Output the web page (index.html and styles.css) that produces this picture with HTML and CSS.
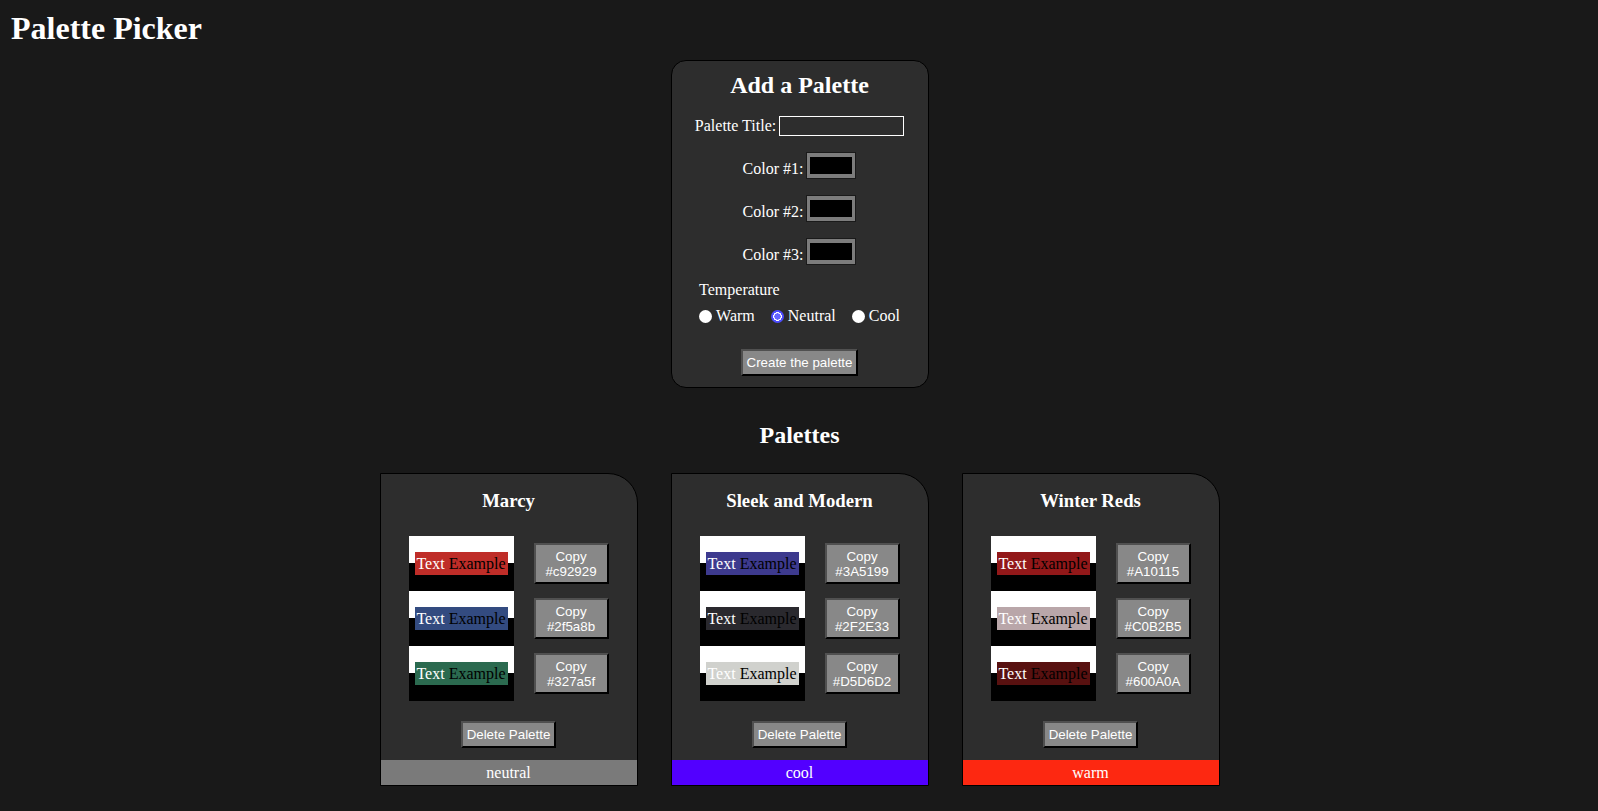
FILE: index.html
```html
<!DOCTYPE html>
<html lang="en">
<head>
<meta charset="utf-8">
<title>Palette Picker</title>
<link rel="stylesheet" href="styles.css">
</head>
<body>
<h1 class="app-title">Palette Picker</h1>
<main class="main">
  <form class="add-form">
    <h2 class="form-title">Add a Palette</h2>
    <div class="field title-field">
      <label for="title" class="field-label">Palette Title:</label>
      <input id="title" type="text" class="text-input">
    </div>
    <div class="field color-field">
      <label for="c1" class="field-label">Color #1:</label>
      <input id="c1" type="color" class="color-input" value="#000000">
    </div>
    <div class="field color-field">
      <label for="c2" class="field-label">Color #2:</label>
      <input id="c2" type="color" class="color-input" value="#000000">
    </div>
    <div class="field color-field">
      <label for="c3" class="field-label">Color #3:</label>
      <input id="c3" type="color" class="color-input" value="#000000">
    </div>
    <div class="temp">
      <div class="temp-label">Temperature</div>
      <div class="radios">
        <label class="radio"><input type="radio" name="temp" class="radio-input">Warm</label>
        <label class="radio"><input type="radio" name="temp" class="radio-input" checked>Neutral</label>
        <label class="radio"><input type="radio" name="temp" class="radio-input">Cool</label>
      </div>
    </div>
    <button type="button" class="btn create-btn">Create the palette</button>
  </form>

  <h2 class="section-title">Palettes</h2>

  <div class="palettes">
    <section class="card">
      <h3 class="card-title">Marcy</h3>
      <div class="swatches">
        <div class="swatch-row">
          <div class="swatch"><span class="sample" style="background:#bf2d28"><span class="t-light">Text</span> <span class="t-dark">Example</span></span></div>
          <button type="button" class="btn copy-btn">Copy<br>#c92929</button>
        </div>
        <div class="swatch-row">
          <div class="swatch"><span class="sample" style="background:#334b80"><span class="t-light">Text</span> <span class="t-dark">Example</span></span></div>
          <button type="button" class="btn copy-btn">Copy<br>#2f5a8b</button>
        </div>
        <div class="swatch-row">
          <div class="swatch"><span class="sample" style="background:#2b6a4f"><span class="t-light">Text</span> <span class="t-dark">Example</span></span></div>
          <button type="button" class="btn copy-btn">Copy<br>#327a5f</button>
        </div>
      </div>
      <button type="button" class="btn delete-btn">Delete Palette</button>
      <div class="temp-bar neutral">neutral</div>
    </section>

    <section class="card">
      <h3 class="card-title">Sleek and Modern</h3>
      <div class="swatches">
        <div class="swatch-row">
          <div class="swatch"><span class="sample" style="background:#3d3a8e"><span class="t-light">Text</span> <span class="t-dark">Example</span></span></div>
          <button type="button" class="btn copy-btn">Copy<br>#3A5199</button>
        </div>
        <div class="swatch-row">
          <div class="swatch"><span class="sample" style="background:#2a292e"><span class="t-light">Text</span> <span class="t-dark">Example</span></span></div>
          <button type="button" class="btn copy-btn">Copy<br>#2F2E33</button>
        </div>
        <div class="swatch-row">
          <div class="swatch"><span class="sample" style="background:#d0d1cd"><span class="t-light">Text</span> <span class="t-dark">Example</span></span></div>
          <button type="button" class="btn copy-btn">Copy<br>#D5D6D2</button>
        </div>
      </div>
      <button type="button" class="btn delete-btn">Delete Palette</button>
      <div class="temp-bar cool">cool</div>
    </section>

    <section class="card">
      <h3 class="card-title">Winter Reds</h3>
      <div class="swatches">
        <div class="swatch-row">
          <div class="swatch"><span class="sample" style="background:#921819"><span class="t-light">Text</span> <span class="t-dark">Example</span></span></div>
          <button type="button" class="btn copy-btn">Copy<br>#A10115</button>
        </div>
        <div class="swatch-row">
          <div class="swatch"><span class="sample" style="background:#b9a6a9"><span class="t-light">Text</span> <span class="t-dark">Example</span></span></div>
          <button type="button" class="btn copy-btn">Copy<br>#C0B2B5</button>
        </div>
        <div class="swatch-row">
          <div class="swatch"><span class="sample" style="background:#581110"><span class="t-light">Text</span> <span class="t-dark">Example</span></span></div>
          <button type="button" class="btn copy-btn">Copy<br>#600A0A</button>
        </div>
      </div>
      <button type="button" class="btn delete-btn">Delete Palette</button>
      <div class="temp-bar warm">warm</div>
    </section>
  </div>
</main>
</body>
</html>
```

FILE: styles.css
```css
* {
  box-sizing: border-box;
}

html, body {
  margin: 0;
  padding: 0;
}

body {
  background: #191919;
  color: #fff;
  font-family: "Liberation Serif", "Times New Roman", serif;
  font-size: 16px;
}

.app-title {
  margin: 0;
  padding: 10px 0 0 11px;
  font-size: 32px;
  line-height: 36px;
  font-weight: bold;
}

.main {
  display: flex;
  flex-direction: column;
  align-items: center;
  padding-left: 1px;
}

/* ---------- Add form ---------- */
.add-form {
  width: 258px;
  margin-top: 14px;
  padding: 10px 0 11px;
  background: #2d2d2d;
  border: 1px solid #000;
  border-radius: 15px;
  display: flex;
  flex-direction: column;
  align-items: center;
}

.form-title {
  margin: 0;
  font-size: 24px;
  line-height: 28px;
  font-weight: bold;
}

.field {
  display: flex;
  gap: 3px;
}

.field-label {
  line-height: 18px;
}

.title-field {
  margin-top: 17px;
  height: 20px;
  align-items: center;
}

.text-input {
  width: 125px;
  height: 20px;
  margin: 0;
  padding: 0 2px;
  border: 1px solid #fff;
  background: transparent;
  color: #fff;
  font-size: 13px;
}

.color-field {
  margin-top: 16px;
  height: 27px;
  align-items: flex-end;
}

.color-field .field-label {
  padding-bottom: 1px;
}

.color-input {
  -webkit-appearance: none;
  appearance: none;
  width: 50px;
  height: 27px;
  margin: 0;
  padding: 4px 3px;
  border: 1px solid #1a1a1a;
  background: #7c7c7c;
  cursor: pointer;
}

.color-input::-webkit-color-swatch-wrapper {
  padding: 0;
}

.color-input::-webkit-color-swatch {
  border: none;
}

.temp {
  margin-top: 16px;
  display: flex;
  flex-direction: column;
}

.temp-label {
  line-height: 18px;
}

.radios {
  margin-top: 8px;
  display: flex;
  gap: 16px;
  height: 18px;
  align-items: center;
}

.radio {
  display: flex;
  align-items: center;
  gap: 4px;
  line-height: 18px;
}

.radio-input {
  -webkit-appearance: none;
  appearance: none;
  width: 13px;
  height: 13px;
  margin: 0;
  border-radius: 50%;
  background: #fff;
}

.radio-input:checked {
  background: radial-gradient(circle, #6767ff 0 3px, #fff 3.3px 4.2px, #4d4dff 4.5px);
}

.btn {
  font-family: "Liberation Sans", Arial, sans-serif;
  font-size: 13.333px;
  color: #fff;
  background: #888;
  border-width: 2px;
  border-style: solid;
  border-color: #505050 #000 #000 #505050;
  padding: 0 4px;
  margin: 0;
  cursor: pointer;
}

.create-btn {
  margin-top: 24px;
  height: 27px;
}

/* ---------- Palettes ---------- */
.section-title {
  margin: 33px 0 0;
  font-size: 24px;
  line-height: 28px;
  font-weight: bold;
}

.palettes {
  margin-top: 24px;
  display: flex;
  gap: 33px;
  justify-content: center;
}

.card {
  width: 258px;
  padding-top: 16px;
  background: #2d2d2d;
  border: 1px solid #000;
  border-top-right-radius: 30px;
  display: flex;
  flex-direction: column;
  align-items: center;
  overflow: hidden;
}

.card-title {
  margin: 0;
  font-size: 18.72px;
  line-height: 22px;
  font-weight: bold;
}

.swatches {
  margin-top: 24px;
  display: flex;
  flex-direction: column;
}

.swatch-row {
  display: flex;
  align-items: center;
  gap: 20px;
  height: 55px;
}

.swatch {
  width: 105px;
  height: 55px;
  background: linear-gradient(to bottom, #fff 0 27px, #000 27px);
  display: flex;
  align-items: center;
  justify-content: center;
}

.sample {
  display: inline-block;
  width: 93px;
  height: 23px;
  line-height: 23px;
  text-align: center;
  white-space: nowrap;
  font-size: 16px;
}

.t-light {
  color: #fff;
}

.t-dark {
  color: #000;
}

.copy-btn {
  width: 75px;
  height: 41px;
  padding: 0;
  line-height: 15px;
}

.delete-btn {
  margin-top: 20px;
  height: 27px;
}

.temp-bar {
  margin-top: 12px;
  width: 100%;
  height: 25px;
  line-height: 25px;
  text-align: center;
  color: #fff;
}

.temp-bar.neutral {
  background: #7a7a7a;
}

.temp-bar.cool {
  background: #5200ff;
}

.temp-bar.warm {
  background: #fd2811;
}
```
